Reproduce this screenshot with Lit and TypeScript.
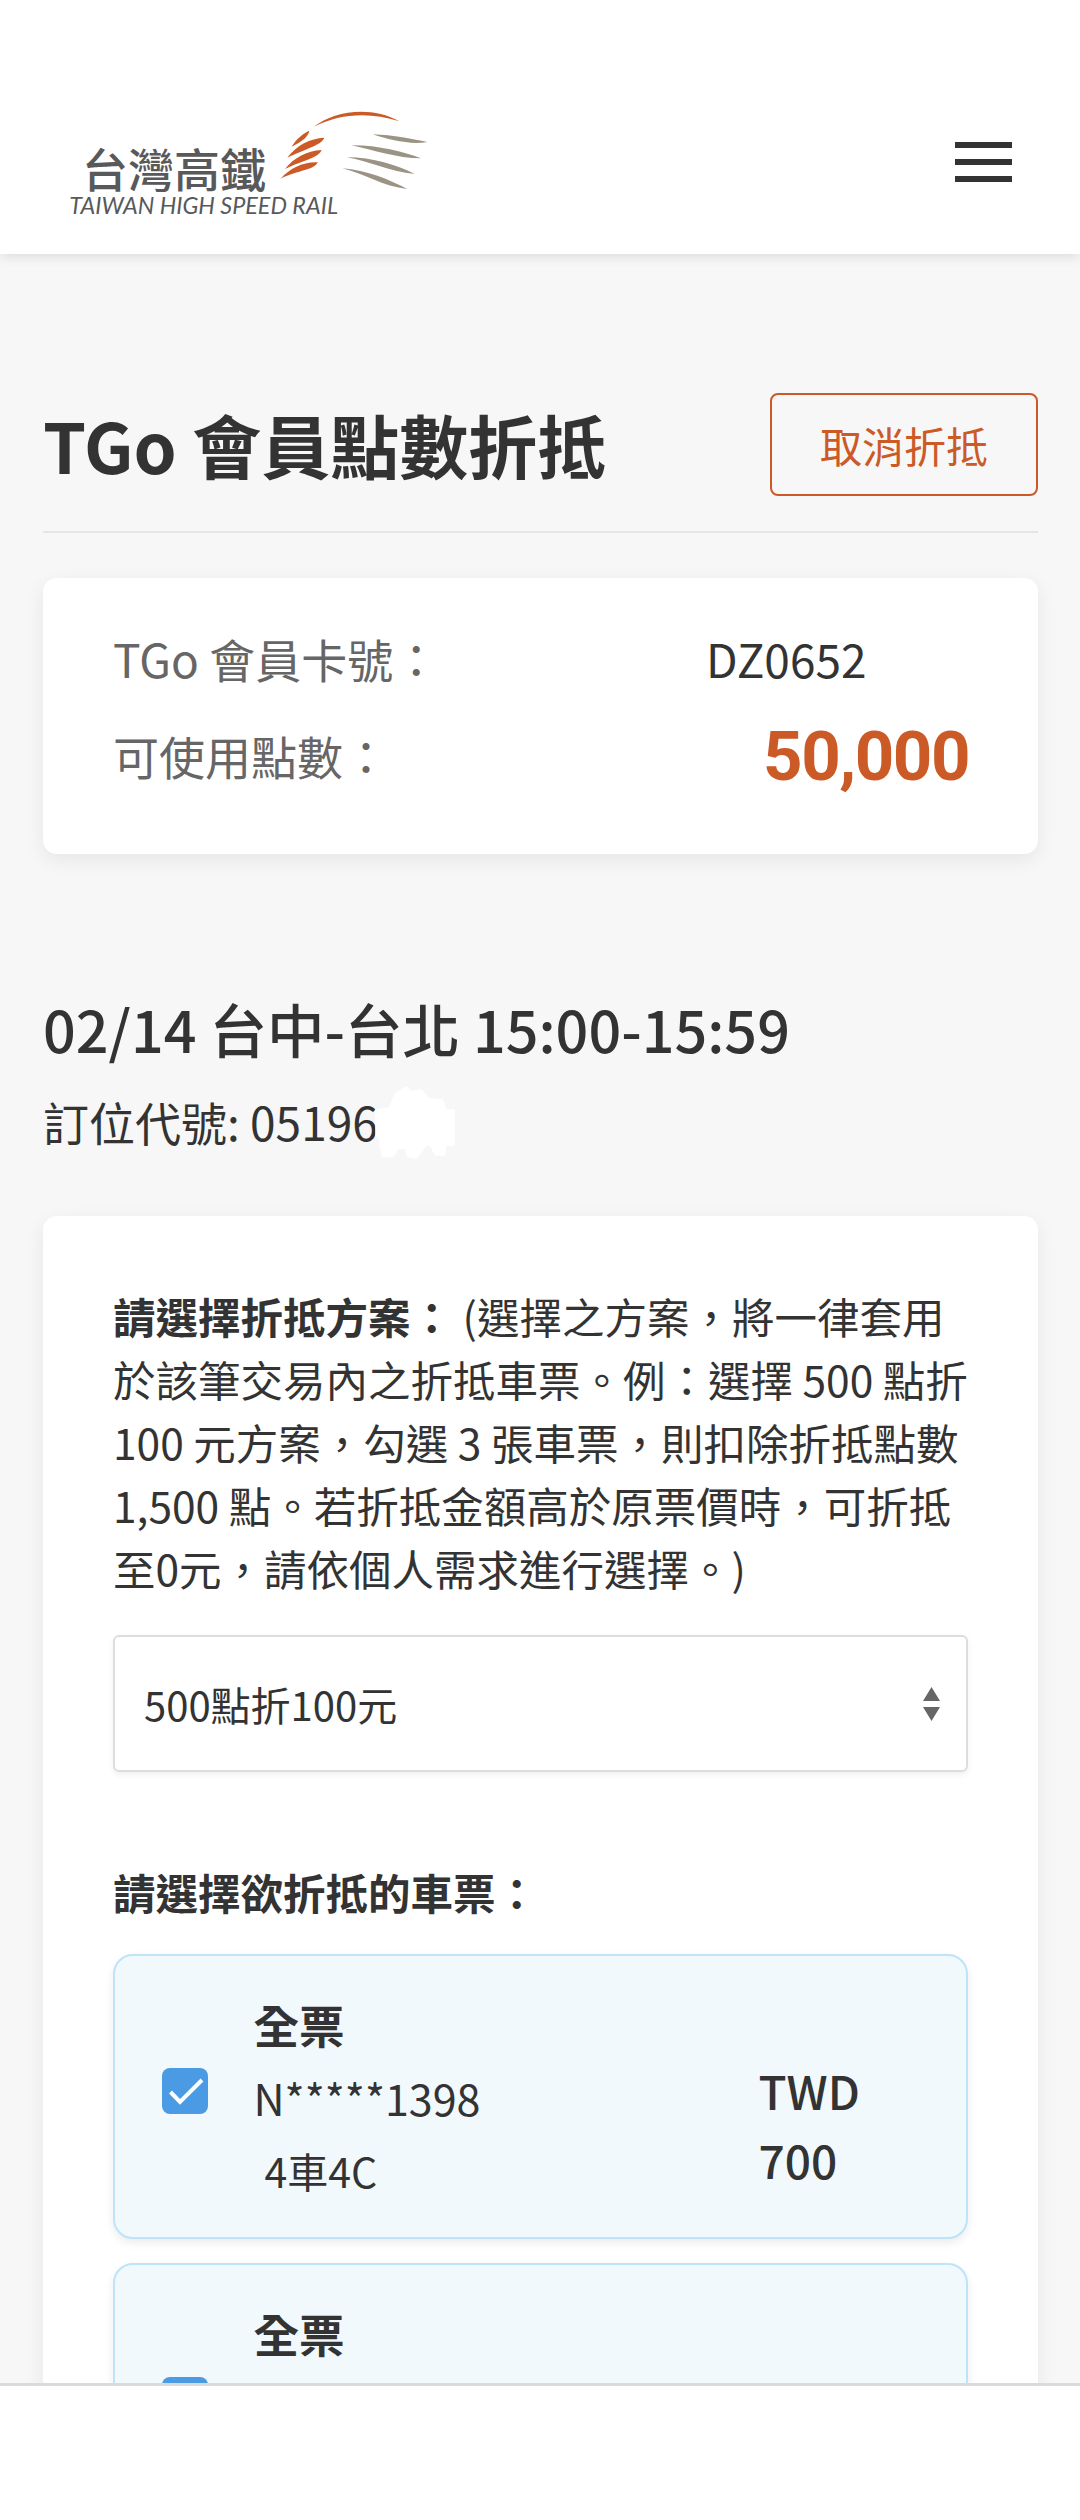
import { LitElement, css, html } from 'lit'
import { customElement } from 'lit/decorators.js'

// the second ticket is cut by the footer, only its heading shows
const tickets = [
   { type: '全票', id: 'N*****1398', seat: '4車4C', price: '700' },
   { type: '全票', id: '', seat: '', price: '' },
]

@customElement('app-root')
export class AppRoot extends LitElement {
   static styles = css`
      :host {
         display: flex;
         flex-direction: column;
         width: 1080px;
         height: 2520px;
         overflow: hidden;
         background: #f7f7f7;
         color: #333;
         font-family: 'Noto Sans CJK TC', 'Noto Sans', sans-serif;
      }

      header {
         display: flex;
         justify-content: space-between;
         align-items: flex-start;
         flex: none;
         height: 254px;
         background: #fff;
         box-shadow: 0 2px 12px rgba(0, 0, 0, 0.12);
         position: relative;
      }
      .logo {
         display: block;
         margin: 80px 0 0 40px;
      }
      .logo-zh {
         font-size: 138px;
         font-weight: 500;
         fill: #58595b;
      }
      .logo-en {
         font-family: Lato, sans-serif;
         font-style: italic;
         font-size: 70px;
         fill: #58595b;
      }
      .menu {
         display: flex;
         flex-direction: column;
         gap: 11px;
         width: 57px;
         margin: 142px 68px 0 0;
      }
      .menu span {
         height: 6px;
         background: #333;
      }

      main {
         flex: 1;
         min-height: 0;
         overflow: hidden;
         padding: 139px 42px 0 43px;
      }
      .title-row {
         display: flex;
         justify-content: space-between;
         align-items: center;
         padding-bottom: 35px;
         border-bottom: 2px solid #e6e6e6;
      }
      h1 {
         margin: 0;
         font-size: 69px;
         line-height: 103px;
         font-weight: 700;
      }
      .cancel {
         display: flex;
         align-items: center;
         justify-content: center;
         box-sizing: border-box;
         width: 268px;
         height: 103px;
         border: 2px solid #cc5a26;
         border-radius: 8px;
         color: #cc5a26;
         font-size: 42px;
      }

      .card {
         background: #fff;
         border-radius: 14px;
         box-shadow: 0 6px 20px rgba(0, 0, 0, 0.07);
      }
      .info {
         margin-top: 45px;
         padding: 31px 70px 50px;
         height: 276px;
         box-sizing: border-box;
      }
      .info-row {
         display: grid;
         grid-template-columns: 1fr 262px;
         align-items: center;
         height: 97px;
         font-size: 46px;
         color: #666;
      }
      .info-row .value {
         color: #333;
      }
      .points {
         text-align: right;
         color: #cc5a26;
         font-family: Roboto, sans-serif;
         font-weight: 700;
         font-size: 69px;
         letter-spacing: -1.500px;
         margin: 3px -1px 0 0;
      }

      h2 {
         margin: 134px 0 0;
         font-size: 57.500px;
         line-height: 80px;
         font-weight: 500;
      }
      .code {
         display: flex;
         align-items: center;
         margin-top: 17px;
         height: 72px;
         font-size: 46px;
      }
      .smudge {
         flex: none;
         margin: 3px 0 0 -3px;
      }

      .plans {
         margin-top: 59px;
         padding: 68px 70px 0;
         border-radius: 14px 14px 0 0;
         min-height: 1400px;
      }
      .note {
         margin: 0;
         font-size: 42.500px;
         line-height: 63px;
      }
      b {
         font-weight: 700;
      }
      .select {
         display: flex;
         align-items: center;
         justify-content: space-between;
         box-sizing: border-box;
         height: 137px;
         margin-top: 36px;
         padding: 0 26px 0 29px;
         border: 2px solid #ddd;
         border-radius: 6px;
         box-shadow: 0 3px 6px rgba(0, 0, 0, 0.06);
         font-size: 40px;
      }
      .arrows {
         display: block;
      }
      .pick {
         margin: 88px 0 31px;
         font-size: 42.500px;
         line-height: 63px;
         font-weight: 700;
      }
      .tickets {
         display: flex;
         flex-direction: column;
         gap: 24px;
      }
      .ticket {
         display: grid;
         grid-template-columns: 92px 505px 1fr;
         align-items: center;
         box-sizing: border-box;
         height: 285px;
         padding: 0 0 0 46.500px;
         background: #f1f9fd;
         border: 2px solid #bfe3f8;
         border-radius: 20px;
         box-shadow: 0 4px 10px rgba(0, 0, 0, 0.08);
         font-size: 43px;
      }
      .check {
         display: block;
         margin-top: -12px;
      }
      .who {
         margin-top: 2px;
      }
      .who div {
         height: 73px;
         line-height: 73px;
      }
      .who b {
         font-size: 45.500px;
      }
      .seat {
         padding-left: 11px;
         font-size: 41px;
      }
      .price {
         font-size: 46px;
         line-height: 69px;
         font-weight: 500;
         margin-top: 56px;
      }

      footer {
         flex: none;
         height: 137px;
         box-sizing: border-box;
         background: #fff;
         border-top: 3px solid #d8dadd;
      }
   `

   renderLogo() {
      return html`
         <svg class="logo" width="420" height="170" viewBox="0 0 1260 510">
            <text class="logo-zh" x="126" y="322" textLength="552">台灣高鐵</text>
            <text class="logo-en" x="88" y="402" textLength="806">TAIWAN HIGH SPEED RAIL</text>
            <g fill="#cc5a26">
               <path d="M822 140C880 95 990 75 1078 124C990 95 900 100 822 140Z" />
               <path d="M755 200C770 175 790 160 808 152C805 170 785 185 755 200Z" />
               <path d="M742 233C770 195 810 175 853 173C845 195 800 205 742 233Z" />
               <path d="M735 267C760 235 800 212 845 210C835 235 790 240 735 267Z" />
               <path d="M722 296C750 265 790 245 833 247C825 270 775 270 722 296Z" />
            </g>
            <g fill="#9b9484">
               <path d="M998 163C1060 165 1120 178 1162 186C1110 195 1050 180 998 163Z" />
               <path d="M935 196C1010 195 1090 215 1143 235C1070 235 1000 210 935 196Z" />
               <path d="M920 232C1000 232 1070 255 1124 282C1050 275 990 245 920 232Z" />
               <path d="M907 265C980 270 1050 300 1102 327C1030 320 970 280 907 265Z" />
            </g>
         </svg>
      `
   }

   renderTicket(t: { type: string; id: string; seat: string; price: string }) {
      return html`
         <div class="ticket">
            <svg class="check" width="46" height="46" viewBox="0 0 46 46">
               <rect width="46" height="46" rx="8" fill="#4a9be4" />
               <path d="M8.500 24L18 34L40 12" fill="none" stroke="#fff" stroke-width="4" />
            </svg>
            <div class="who">
               <div><b>${t.type}</b></div>
               <div>${t.id}</div>
               <div class="seat">${t.seat}</div>
            </div>
            ${t.price ? html`<div class="price">TWD<br />${t.price}</div>` : ''}
         </div>
      `
   }

   render() {
      return html`
         <header>
            ${this.renderLogo()}
            <div class="menu"><span></span><span></span><span></span></div>
         </header>
         <main>
            <div class="title-row">
               <h1>TGo 會員點數折抵</h1>
               <div class="cancel">取消折抵</div>
            </div>
            <div class="card info">
               <div class="info-row"><span>TGo 會員卡號：</span><span class="value">DZ0652</span></div>
               <div class="info-row"><span>可使用點數：</span><span class="points">50,000</span></div>
            </div>
            <h2>02/14 台中-台北 15:00-15:59</h2>
            <div class="code">
               訂位代號: 05196
               <svg class="smudge" width="80" height="73" viewBox="1070 320 240 220">
                  <path fill="#fff" d="M1070 390L1110 385L1130 340L1165 320L1180 335L1210 330L1230 355L1275 360L1285 390L1310 390V500H1285L1280 530H1250L1235 500H1225L1195 540L1165 535L1160 510H1140L1125 535H1090L1080 480L1070 470Z" />
               </svg>
            </div>
            <div class="card plans">
               <p class="note"><b>請選擇折抵方案：</b> (選擇之方案，將一律套用於該筆交易內之折抵車票。例：選擇 500 點折 100 元方案，勾選 3 張車票，則扣除折抵點數 1,500 點。若折抵金額高於原票價時，可折抵至0元，請依個人需求進行選擇。)</p>
               <div class="select">
                  <span>500點折100元</span>
                  <svg class="arrows" width="17" height="34" viewBox="0 0 17 34">
                     <path fill="#666" d="M8.500 0L17 14H0ZM0 20H17L8.500 34Z" />
                  </svg>
               </div>
               <div class="pick">請選擇欲折抵的車票：</div>
               <div class="tickets">${tickets.map(t => this.renderTicket(t))}</div>
            </div>
         </main>
         <footer></footer>
      `
   }
}
